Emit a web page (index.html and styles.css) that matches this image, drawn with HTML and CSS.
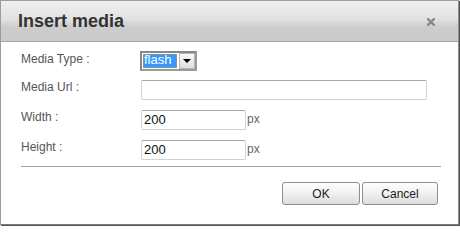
FILE: index.html
```html
<!DOCTYPE html>
<html>
<head>
<meta charset="utf-8">
<title>Insert media</title>
<link rel="stylesheet" href="styles.css">
</head>
<body>
<div class="dialog">
  <div class="header">
    <h1 class="title">Insert media</h1>
    <span class="close" aria-label="close">
      <svg width="8" height="8" viewBox="0 0 8 8"><path d="M1 1 L7 7 M7 1 L1 7" stroke="#8a8a8a" stroke-width="2.4" stroke-linecap="square"/></svg>
    </span>
  </div>
  <div class="body">
    <div class="form">
      <label class="label label-first">Media Type :</label>
      <div class="field">
        <span class="select">
          <span class="sel-value">flash</span>
          <span class="sel-btn"><span class="arrow"></span></span>
        </span>
      </div>
      <label class="label">Media Url :</label>
      <div class="field"><span class="input input-url"></span></div>
      <label class="label">Width :</label>
      <div class="field"><span class="input input-num">200</span><span class="unit">px</span></div>
      <label class="label">Height :</label>
      <div class="field"><span class="input input-num">200</span><span class="unit">px</span></div>
    </div>
    <div class="sep"></div>
    <div class="buttons">
      <button class="btn btn-ok">OK</button>
      <button class="btn btn-cancel">Cancel</button>
    </div>
  </div>
</div>
</body>
</html>
```
FILE: styles.css
```css
html, body {
  margin: 0;
  padding: 0;
  background: #fff;
}
body {
  font-family: "Liberation Sans", Arial, sans-serif;
  width: 460px;
  height: 227px;
  overflow: hidden;
}
.dialog {
  box-sizing: border-box;
  width: 459px;
  height: 225px;
  border: 1px solid #9c9c9c;
  border-right-color: #8c8c8c;
  border-bottom-color: #7a7a7a;
  background: #fff;
  box-shadow: 1px 1px 0 #555;
}
.header {
  height: 40px;
  border-bottom: 1px solid #a3a3a3;
  background: linear-gradient(#f0f0f0 0%, #e2e2e2 45%, #cdcdcd 65%, #cbcbcb 100%);
  display: flex;
  align-items: center;
  justify-content: space-between;
  padding: 0 23px 0 17px;
}
.title {
  margin: 0;
  font-size: 18px;
  font-weight: bold;
  color: #333;
  line-height: 40px;
}
.close {
  display: flex;
  width: 8px;
  height: 8px;
  margin-top: 1px;
}
.body {
  padding: 8px 17px 0 20px;
}
.form {
  display: grid;
  grid-template-columns: 120px 1fr;
  grid-auto-rows: 20px;
  row-gap: 10px;
}
.label {
  font-size: 12px;
  line-height: 14px;
  color: #555;
  align-self: start;
}
.label-first {
  padding-top: 2px;
}
.field {
  display: flex;
  align-items: baseline;
}
.select {
  box-sizing: border-box;
  display: flex;
  align-items: center;
  gap: 2px;
  width: 57px;
  height: 20px;
  margin-top: 1px;
  margin-left: -1px;
  border: 2px solid #9a9a9a;
  border-top-color: #888;
  border-left-color: #888;
  background: #fff;
  padding-left: 1px;
}
.sel-value {
  box-sizing: border-box;
  width: 34px;
  height: 14px;
  background: #3399ff;
  color: #fff;
  font-size: 13px;
  line-height: 12px;
  padding-left: 1px;
  outline: 1px dotted #e08a2a;
  outline-offset: -1px;
}
.sel-btn {
  box-sizing: border-box;
  width: 16px;
  height: 16px;
  border: 1px solid #b5b5b5;
  background: linear-gradient(#fbfbfb, #dedede);
  display: flex;
  align-items: center;
  justify-content: center;
}
.arrow {
  width: 0;
  height: 0;
  border-left: 4px solid transparent;
  border-right: 4px solid transparent;
  border-top: 4px solid #000;
}
.input {
  box-sizing: border-box;
  display: block;
  height: 20px;
  border: 1px solid #d2d2d2;
  border-top-color: #a8a8a8;
  border-radius: 2px;
  background: #fff;
  font-size: 13px;
  line-height: 18px;
  color: #111;
  padding-left: 2px;
}
.input-url {
  width: 286px;
}
.input-num {
  width: 105px;
}
.unit {
  font-size: 12px;
  color: #666;
  margin-left: 1px;
  position: relative;
  top: -1px;
}
.sep {
  height: 1px;
  background: #a5a5a5;
  margin-top: 6px;
}
.buttons {
  display: flex;
  justify-content: flex-end;
  gap: 2px;
  margin-top: 15px;
  margin-right: 3px;
}
.btn {
  box-sizing: border-box;
  height: 23px;
  border: 1px solid #8e8e8e;
  border-radius: 3px;
  background: linear-gradient(#ffffff 0%, #f2f2f2 45%, #dcdcdc 100%);
  font-family: "Liberation Sans", Arial, sans-serif;
  font-size: 12px;
  color: #222;
  padding: 0;
}
.btn-ok {
  width: 78px;
}
.btn-cancel {
  width: 76px;
}
```
